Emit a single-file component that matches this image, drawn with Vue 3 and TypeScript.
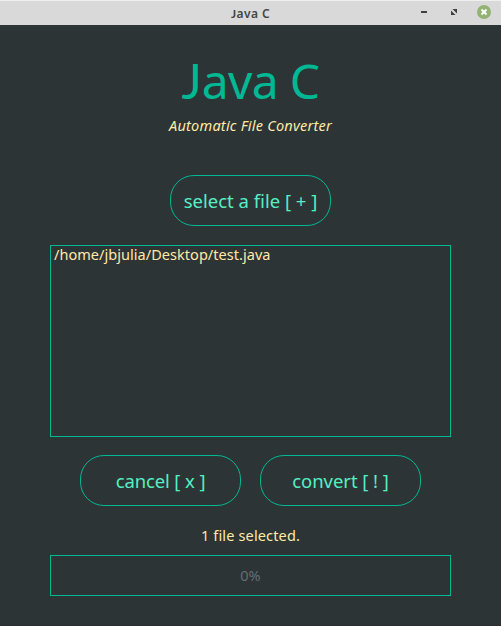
<script setup lang="ts">
import { ref } from 'vue'

const files = ref<string[]>(['/home/jbjulia/Desktop/test.java'])
const progress = ref<number>(0)
</script>

<template>
  <div class="window">
    <header class="titlebar">
      <span class="caption"><span class="cap">J</span>ava C</span>
      <div class="controls">
        <svg width="80" height="20" viewBox="0 0 80 20">
          <rect x="7" y="8" width="6" height="2" fill="#404040" />
          <path d="M38.500 6h4.500v4.500zM37 7.500v4.500h4.500z" fill="#404040" />
          <circle cx="70" cy="9" r="7" fill="#92b372" />
          <path d="M67.500 6.500l5 5m0-5l-5 5" stroke="#fff" stroke-width="2" fill="none" />
        </svg>
      </div>
    </header>
    <main class="content">
      <h1 class="title"><span class="cap">J</span><span>ava C</span></h1>
      <p class="subtitle"><span>Automatic File Converter</span></p>
      <button class="btn select"><span>select a file [ + ]</span></button>
      <div class="files">
        <div v-for="file in files" :key="file" class="file"><span>{{ file }}</span></div>
      </div>
      <div class="actions">
        <button class="btn cancel"><span>cancel [ x ]</span></button>
        <button class="btn convert"><span>convert [ ! ]</span></button>
      </div>
      <p class="status"><span>{{ files.length }} file selected.</span></p>
      <div class="progress"><span>{{ progress }}%</span></div>
    </main>
  </div>
</template>

<style>
body {
  background: #2d3436;
}
</style>

<style scoped>
.window {
  width: 501px;
  height: 626px;
  overflow: hidden;
  background: #2d3436;
  font-family: "Noto Sans", "Open Sans", sans-serif;
  box-sizing: border-box;
  border-bottom: 1px solid #292c30;
}
.window * {
  box-sizing: border-box;
}
span {
  white-space: pre;
}
.cap {
  font-family: Lato, "Noto Sans", sans-serif;
}
.titlebar {
  display: grid;
  grid-template-columns: 1fr auto 1fr;
  height: 25px;
  background: #d9d9d9;
  border-top: 1px solid #efefef;
}
.caption {
  grid-column: 2;
  font-size: 12px;
  font-weight: 600;
  line-height: 25px;
  height: 24px;
  letter-spacing: 0.4px;
  color: #454545;
}
.caption .cap {
  font-weight: 700;
}
.controls {
  justify-self: end;
  padding: 2px 7px 0 0;
  height: 22px;
}
.controls svg {
  display: block;
}
.content {
  display: flex;
  flex-direction: column;
  align-items: center;
}
.title {
  margin: 31px 0 0;
  height: 50px;
  line-height: 50px;
  font-size: 48px;
  font-weight: 400;
  letter-spacing: -0.7px;
  color: #00b894;
}
.title .cap {
  letter-spacing: 0;
}
.subtitle {
  margin: 9px 0 0;
  height: 20px;
  line-height: 20px;
  font-size: 14.500px;
  letter-spacing: 0.23px;
  font-style: italic;
  color: #ffeaa7;
}
.btn {
  width: 161px;
  height: 51px;
  padding: 1px 0 0;
  border: 1px solid #00b894;
  border-radius: 24px;
  background: transparent;
  font-family: inherit;
  font-size: 18.500px;
  line-height: 48px;
  color: #55efc4;
}
.cancel {
  letter-spacing: -0.12px;
}
.convert {
  letter-spacing: -0.05px;
}
.select {
  margin-top: 40px;
}
.files {
  width: 401px;
  height: 192px;
  margin-top: 19px;
  padding: 0 3px;
  border: 1px solid #00b894;
}
.file {
  height: 16px;
  line-height: 16px;
  font-size: 14.500px;
  letter-spacing: 0.04px;
  color: #ffeaa7;
}
.actions {
  display: flex;
  gap: 19px;
  margin-top: 18px;
}
.status {
  margin: 19px 0 0;
  height: 20px;
  line-height: 20px;
  font-size: 14.500px;
  letter-spacing: 0.15px;
  color: #ffeaa7;
}
.progress {
  width: 401px;
  height: 41px;
  margin-top: 10px;
  border: 1px solid #00b894;
  line-height: 39px;
  text-align: center;
  font-size: 14.500px;
  color: #636e72;
}
</style>
